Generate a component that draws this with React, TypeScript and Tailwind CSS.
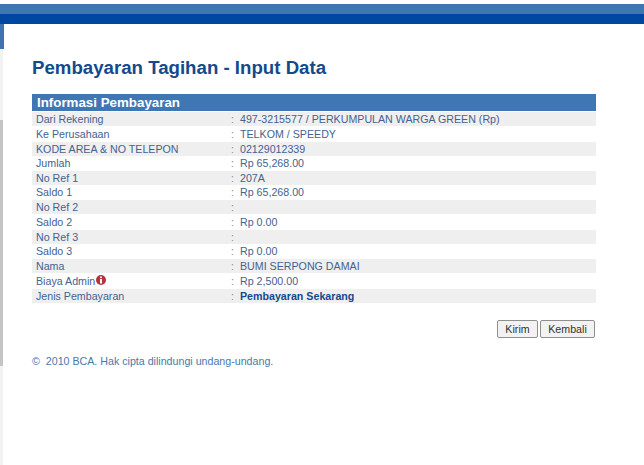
const rows = [
    { label: "Dari Rekening", value: "497-3215577 / PERKUMPULAN WARGA GREEN (Rp)", rowClass: "h-[14px] bg-[#efefef]" },
    { label: "Ke Perusahaan", value: "TELKOM / SPEEDY", rowClass: "h-[16px] bg-white" },
    { label: "KODE AREA & NO TELEPON", value: "02129012339", rowClass: "h-[14px] bg-[#efefef]" },
    { label: "Jumlah", value: "Rp 65,268.00", rowClass: "h-[15px] pb-px bg-white" },
    { label: "No Ref 1", value: "207A", rowClass: "h-[14px] bg-[#efefef]" },
    { label: "Saldo 1", value: "Rp 65,268.00", rowClass: "h-[15px] pb-px bg-white" },
    { label: "No Ref 2", value: "", rowClass: "h-[14px] bg-[#efefef]" },
    { label: "Saldo 2", value: "Rp 0.00", rowClass: "h-[16px] bg-white" },
    { label: "No Ref 3", value: "", rowClass: "h-[14px] bg-[#efefef]" },
    { label: "Saldo 3", value: "Rp 0.00", rowClass: "h-[15px] pb-px bg-white" },
    { label: "Nama", value: "BUMI SERPONG DAMAI", rowClass: "h-[14px] bg-[#efefef]" },
    { label: "Biaya Admin", value: "Rp 2,500.00", rowClass: "h-[16px] bg-white", info: true },
    { label: "Jenis Pembayaran", value: "Pembayaran Sekarang", rowClass: "h-[14px] bg-[#efefef]", bold: true },
];

const InfoIcon = () => (
    <svg width="10" height="10" viewBox="0 0 10 10" className="shrink-0 -mt-[2px]">
        <circle cx="5" cy="5" r="5" fill="#b5333a" />
        <rect x="4" y="1.5" width="2" height="1.6" fill="#fff" />
        <rect x="4" y="4" width="2" height="4.5" fill="#fff" />
    </svg>
);

const App = () => {
    return (
        <div className="flex h-[465px] w-[644px] flex-col overflow-hidden bg-white font-['Liberation_Sans',Arial,sans-serif]">
            <div className="mt-1 h-[10px] shrink-0 bg-[#3f77b4]" />
            <div className="h-[10px] shrink-0 bg-[#0047a1]" />

            <div className="flex flex-1">
                <div className="flex w-[4px] shrink-0 flex-col">
                    <div className="h-[25px] bg-[#3f74ae]" />
                    <div className="h-[71px] w-[3px] bg-[#f2f2f2]" />
                    <div className="h-[246px] w-[3px] bg-[#c4c4c4]" />
                    <div className="flex-1 w-[3px] bg-[#f2f2f2]" />
                </div>

                <div className="w-[564px] ml-[28px] pt-[33px]">
                    <h1 className="h-[22px] text-[18.67px] leading-[22px] font-bold text-[#14498c]">
                        Pembayaran Tagihan - Input Data
                    </h1>

                    <div className="mt-[15px] h-[17px] bg-[#3f77b4] pl-[5px] text-[13.33px] leading-[17px] font-bold text-white">
                        Informasi Pembayaran
                    </div>
                    <div className="h-px bg-white" />

                    <div className="text-[10.67px] text-[#44628f]">
                        {rows.map((row) => (
                            <div key={row.label} className={`flex items-center ${row.rowClass}`}>
                                <div className="flex w-[199px] shrink-0 items-center gap-px pl-[4px]">
                                    <span>{row.label}</span>
                                    {row.info && <InfoIcon />}
                                </div>
                                <span className="w-[9px] shrink-0 text-[#8a8a8a]">:</span>
                                <span className={row.bold ? "font-bold text-[#14498c]" : ""}>{row.value}</span>
                            </div>
                        ))}
                    </div>

                    <div className="mt-[17px] flex justify-end gap-[2px] pr-[1px]">
                        <button className="h-[18px] w-[41px] rounded-[2px] border border-[#8f8f8f] bg-[#f2f2f2] text-[10.67px] leading-none text-[#333333]">
                            Kirim
                        </button>
                        <button className="h-[18px] w-[55px] rounded-[2px] border border-[#8f8f8f] bg-[#f2f2f2] text-[10.67px] leading-none text-[#333333]">
                            Kembali
                        </button>
                    </div>

                    <p className="mt-[17px] text-[10.67px] leading-[13px] text-[#4a78ab] whitespace-pre">
                        ©  2010 BCA. Hak cipta dilindungi undang-undang.
                    </p>
                </div>
            </div>
        </div>
    );
};

export default App;
